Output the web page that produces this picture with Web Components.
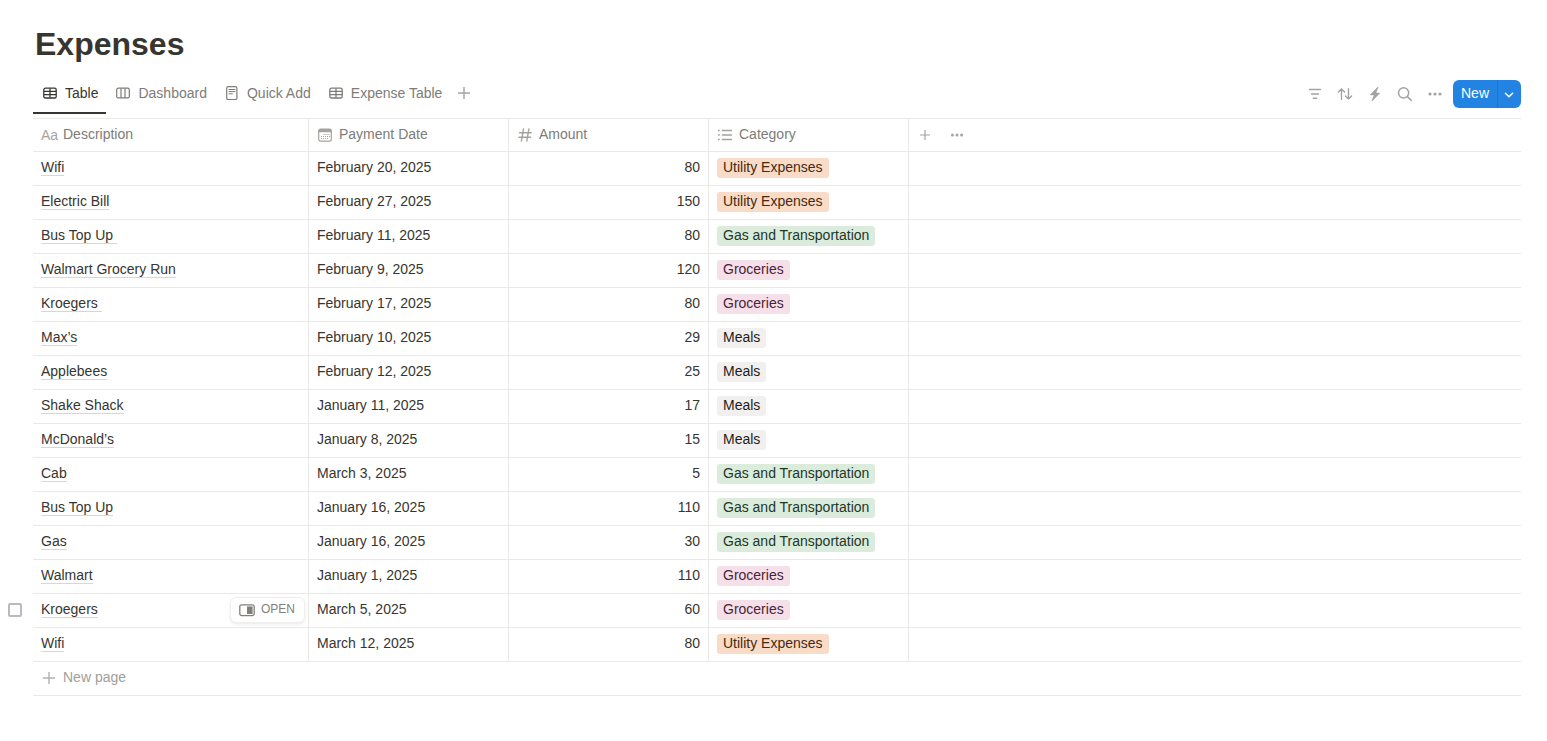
<!DOCTYPE html>
<html lang="en">
<head>
<meta charset="utf-8">
<title>Expenses</title>
<style>
html { background: #fff; }
body { margin: 0; font: 14px/20px "Liberation Sans", Arial, Helvetica, sans-serif; color: #37352f; }
</style>
</head>
<body>
<expenses-page></expenses-page>
<script>
const ICONS = {
  table: [14, 14, '<g fill="none" stroke="currentColor" stroke-width="1.3"><rect x=".8" y="2.2" width="12.4" height="9.8" rx="1.6"/><path d="M1 5.4h12M1 8.7h12M7 2.4v9.4"/></g>'],
  board: [14, 14, '<g fill="none" stroke="currentColor" stroke-width="1.2"><rect x=".7" y="2.2" width="12.6" height="9.7" rx="1.6"/><path d="M5 2.4v9.4M9 2.4v9.4"/></g>'],
  page: [14, 14, '<g fill="none" stroke="currentColor" stroke-width="1.2"><rect x="1.7" y=".7" width="10.2" height="12.8" rx="1.6"/><path d="M4 3.5h6M4 5.6h6M4 7.8h3.4" stroke-linecap="round" stroke-width="1"/></g>'],
  plus: [16, 16, '<path d="M8 2v12M2 8h12" fill="none" stroke="currentColor" stroke-width="1.4"/>'],
  smallplus: [16, 16, '<path d="M8 3v10M3 8h10" fill="none" stroke="currentColor" stroke-width="1.2"/>'],
  filter: [16, 16, '<path d="M2.6 3.5h10.8M4.5 8h7M6.4 12.3h3.2" fill="none" stroke="currentColor" stroke-width="1.6" stroke-linecap="round"/>'],
  sort: [16, 16, '<path d="M4.5 13.2V3M1.4 6.1l3.1-3.2 3.1 3.2M11.5 2.8V13M8.4 9.9l3.1 3.2 3.1-3.2" fill="none" stroke="currentColor" stroke-width="1.4" stroke-linecap="round" stroke-linejoin="round"/>'],
  bolt: [16, 16, '<path d="M10.6.9 3.3 8.4c-.4.4-.2.9.4.9h3.2l-2.3 5.3c-.2.6.4.9.8.5l7.3-7.5c.4-.4.2-.9-.4-.9H9.1l2.3-5.3c.2-.6-.4-.9-.8-.5z" fill="currentColor"/>'],
  search: [16, 16, '<g fill="none" stroke="currentColor" stroke-width="1.5" stroke-linecap="round"><circle cx="6.6" cy="6.8" r="5.1"/><path d="m10.4 10.6 3.8 3.8"/></g>'],
  dots: [16, 16, '<g fill="currentColor"><circle cx="3" cy="8" r="1.6"/><circle cx="8" cy="8" r="1.6"/><circle cx="13" cy="8" r="1.6"/></g>'],
  smalldots: [16, 16, '<g fill="currentColor"><circle cx="3.4" cy="8" r="1.5"/><circle cx="8" cy="8" r="1.5"/><circle cx="12.6" cy="8" r="1.5"/></g>'],
  chevron: [10, 10, '<path d="M1.4 3.2 5 6.8l3.6-3.6" fill="none" stroke="currentColor" stroke-width="1.5" stroke-linecap="round"/>'],
  date: [16, 16, '<rect x="1.7" y="2.2" width="12.6" height="12" rx="1.7" fill="none" stroke="currentColor" stroke-width="1.2"/><path d="M1.5 5.2V3.6Q1.5 2 3.2 2h9.6q1.7 0 1.7 1.6v1.6z" fill="currentColor"/><path d="M6.5 7.5H13M4 9.5h9M4 11.5h7" stroke="currentColor" stroke-width="1" stroke-dasharray="1 1"/>'],
  number: [16, 16, '<path d="M6.5 2 4.4 14M11.9 2 9.8 14M2.5 5.7h11.7M1.9 10.2h11.7" fill="none" stroke="currentColor" stroke-width="1.4" stroke-linecap="round"/>'],
  list: [16, 16, '<path d="M5.3 3.5h9.2M5.3 8h9.2M5.3 12.5h9.2" fill="none" stroke="currentColor" stroke-width="1.3" stroke-linecap="round"/><path d="M1 2.7h1.7v1.6H1zM1 7.2h1.7v1.6H1zM1 11.7h1.7v1.6H1z" fill="currentColor"/>'],
  peek: [16, 16, '<rect x=".8" y="2.8" width="14.4" height="10.8" rx="1.8" fill="none" stroke="currentColor" stroke-width="1.3"/><path d="M8 4.4h5.6v7.6H8z" fill="currentColor"/>']
};

class UiIcon extends HTMLElement {
  connectedCallback() {
    if (this.shadowRoot) return;
    const [w, h, body] = ICONS[this.getAttribute('name')];
    this.attachShadow({ mode: 'open' }).innerHTML =
      `<style>:host{display:inline-flex;flex:none}svg{display:block}</style>
       <svg width="${w}" height="${h}" viewBox="0 0 ${w} ${h}" aria-hidden="true">${body}</svg>`;
  }
}

class ViewTab extends HTMLElement {
  connectedCallback() {
    if (this.shadowRoot) return;
    const on = this.hasAttribute('selected');
    this.attachShadow({ mode: 'open' }).innerHTML = `
      <style>
        :host { display: block; }
        button { display: flex; align-items: center; gap: 8px; height: 42px; padding: 1px 8px 0 10px;
          border: 0; border-bottom: 2px solid transparent; background: none;
          font: inherit; color: #7d7c78; cursor: pointer; white-space: nowrap; }
        button[aria-selected=true] { color: #37352f; border-color: #37352f; }
        ui-icon { padding-top: 1px; }
      </style>
      <button type="button" role="tab" aria-selected="${on}"><ui-icon name="${this.getAttribute('icon')}"></ui-icon><span><slot></slot></span></button>`;
  }
}

class IconButton extends HTMLElement {
  connectedCallback() {
    if (this.shadowRoot) return;
    this.attachShadow({ mode: 'open' }).innerHTML = `
      <style>
        :host { display: block; color: #a5a39f; }
        button { display: flex; align-items: center; justify-content: center; width: 100%; height: 28px;
          padding: 0; border: 0; background: none; color: inherit; cursor: pointer; }
      </style>
      <button type="button" aria-label="${this.getAttribute('label')}"><ui-icon name="${this.getAttribute('icon')}"></ui-icon></button>`;
  }
}

class NewButton extends HTMLElement {
  connectedCallback() {
    if (this.shadowRoot) return;
    this.attachShadow({ mode: 'open' }).innerHTML = `
      <style>
        :host { display: flex; height: 28px; border-radius: 6px; overflow: hidden; background: #2383e2; color: #fff; }
        button { display: flex; align-items: center; justify-content: center; border: 0; background: none;
          color: inherit; font: inherit; cursor: pointer; padding: 0 8px 2px; }
        .more { width: 24px; padding: 2px 2px 0 0; border-left: 1px solid #1f75ca; }
      </style>
      <button type="button"><slot></slot></button>
      <button type="button" class="more" aria-label="More options"><ui-icon name="chevron"></ui-icon></button>`;
  }
}

class CategoryTag extends HTMLElement {
  connectedCallback() {
    if (this.shadowRoot) return;
    this.attachShadow({ mode: 'open' }).innerHTML = `
      <style>
        :host { display: inline-block; vertical-align: top; height: 20px; padding: 0 6px; border-radius: 3px;
          line-height: 18px; white-space: nowrap; background: #f1f0ef; color: #1e1c19; }
        :host([tone=orange]) { background: #f8dcc8; color: #49290e; }
        :host([tone=green]) { background: #dbecdd; color: #1c3829; }
        :host([tone=pink]) { background: #f5dfe9; color: #4c2337; }
      </style><slot></slot>`;
  }
}

class OpenButton extends HTMLElement {
  connectedCallback() {
    if (this.shadowRoot) return;
    this.attachShadow({ mode: 'open' }).innerHTML = `
      <style>
        :host { display: block; }
        button { display: flex; align-items: center; gap: 6px; height: 24px; padding: 0 9px 0 8px; border: 0; border-radius: 5px;
          background: #fff; color: #82807b; font: inherit; font-size: 12px; cursor: pointer;
          box-shadow: 0 0 0 1px #efeeed, 0 2px 4px #0000001a; }
        span { padding-bottom: 2px; }
      </style>
      <button type="button"><ui-icon name="peek"></ui-icon><span><slot></slot></span></button>`;
  }
}

const TONES = { 'Utility Expenses': 'orange', 'Gas and Transportation': 'green', 'Groceries': 'pink', 'Meals': 'gray' };
const ROWS = [
  ['Wifi', 'February 20, 2025', 80, 'Utility Expenses'],
  ['Electric Bill', 'February 27, 2025', 150, 'Utility Expenses'],
  ['Bus Top Up ', 'February 11, 2025', 80, 'Gas and Transportation'],
  ['Walmart Grocery Run', 'February 9, 2025', 120, 'Groceries'],
  ['Kroegers ', 'February 17, 2025', 80, 'Groceries'],
  ['Max’s', 'February 10, 2025', 29, 'Meals'],
  ['Applebees', 'February 12, 2025', 25, 'Meals'],
  ['Shake Shack', 'January 11, 2025', 17, 'Meals'],
  ['McDonald’s', 'January 8, 2025', 15, 'Meals'],
  ['Cab', 'March 3, 2025', 5, 'Gas and Transportation'],
  ['Bus Top Up', 'January 16, 2025', 110, 'Gas and Transportation'],
  ['Gas', 'January 16, 2025', 30, 'Gas and Transportation'],
  ['Walmart', 'January 1, 2025', 110, 'Groceries'],
  ['Kroegers', 'March 5, 2025', 60, 'Groceries', true],
  ['Wifi', 'March 12, 2025', 80, 'Utility Expenses']
];

class ExpenseTable extends HTMLElement {
  connectedCallback() {
    if (this.shadowRoot) return;
    const rows = ROWS.map(([name, date, amount, category, active]) => `
      <tr>
        <td class="gutter">${active ? '<input type="checkbox" aria-label="Select Kroegers">' : ''}</td>
        <td><div class="name"><a href="#">${name}</a>${active ? '<open-button>OPEN</open-button>' : ''}</div></td>
        <td>${date}</td>
        <td class="num">${amount}</td>
        <td class="tag"><category-tag tone="${TONES[category]}">${category}</category-tag></td>
        <td class="rest"></td>
      </tr>`).join('');
    this.attachShadow({ mode: 'open' }).innerHTML = `
      <style>
        :host { display: block; }
        table { width: 100%; table-layout: fixed; border-collapse: separate; border-spacing: 0; }
        .c0 { width: 33px; } .c1 { width: 276px; } .c2 { width: 200px; }
        th, td { box-sizing: border-box; height: 34px; padding: 5px 8px 8px; vertical-align: top; text-align: left;
          font-weight: 400; border: 0 solid #e9e9e7; border-width: 0 1px 1px 0; white-space: nowrap; }
        th { border-top-width: 1px; padding: 5px 8px 7px; color: #7d7c78; }
        .gutter { border: 0; padding: 0 8px 2px; vertical-align: middle; }
        .rest, .new { border-right: 0; }
        .rest { padding: 2px 2px 1px; }
        .num { text-align: right; }
        td.tag { padding: 6px 8px 7px; }
        .head { display: flex; align-items: center; gap: 6px; height: 20px; }
        .head ui-icon, .aa { color: #a5a39f; padding-top: 2px; }
        .aa { width: 16px; }
        .actions { display: flex; } .actions icon-button { width: 32px; }
        .actions icon-button:first-child { width: 28px; margin-right: 2px; }
        .name { display: flex; align-items: center; justify-content: space-between; height: 20px; }
        .name a { color: inherit; text-decoration: none; white-space: pre; line-height: 16px; border-bottom: 1px solid #d8d7d4; }
        open-button { margin: 1px -4px 0 0; }
        input { display: block; box-sizing: border-box; appearance: none; width: 14px; height: 14px; margin: 0; border: 2px solid #bab8c0; border-radius: 2px; background: #fff; }
        .new button { display: flex; align-items: center; gap: 6px; padding: 0; border: 0; background: none; font: inherit; color: #a09e9a; cursor: pointer; }
        .new ui-icon { padding-top: 2px; color: #b3b1ad; }
      </style>
      <table>
        <colgroup><col class="c0"><col class="c1"><col class="c2"><col class="c2"><col class="c2"><col></colgroup>
        <thead><tr>
          <td class="gutter"></td>
          <th scope="col"><div class="head"><span class="aa">Aa</span><span>Description</span></div></th>
          <th scope="col"><div class="head"><ui-icon name="date"></ui-icon>Payment Date</div></th>
          <th scope="col"><div class="head"><ui-icon name="number"></ui-icon>Amount</div></th>
          <th scope="col"><div class="head"><ui-icon name="list"></ui-icon>Category</div></th>
          <th class="rest"><div class="actions"><icon-button icon="smallplus" label="Add property"></icon-button><icon-button icon="smalldots" label="Property options"></icon-button></div></th>
        </tr></thead>
        <tbody>${rows}
          <tr><td class="gutter"></td><td class="new" colspan="5"><button type="button"><ui-icon name="plus"></ui-icon>New page</button></td></tr>
        </tbody>
      </table>`;
  }
}

class ExpensesPage extends HTMLElement {
  connectedCallback() {
    if (this.shadowRoot) return;
    this.attachShadow({ mode: 'open' }).innerHTML = `
      <style>
        :host { display: block; padding: 24px 26px 44px 0; }
        h1 { margin: 0 0 8px; padding-left: 35px; font-size: 32px; line-height: 40px; font-weight: 700; }
        .bar { display: flex; align-items: flex-start; padding: 0 0 4px 33px; }
        nav { display: flex; flex: 1; }
        .add { width: 28px; padding-top: 7px; }
        .tools { display: flex; padding-top: 8px; }
        .tools icon-button { width: 30px; }
        new-button { margin-left: 3px; }
      </style>
      <h1>Expenses</h1>
      <div class="bar">
        <nav role="tablist">
          <view-tab icon="table" selected>Table</view-tab>
          <view-tab icon="board">Dashboard</view-tab>
          <view-tab icon="page">Quick Add</view-tab>
          <view-tab icon="table">Expense Table</view-tab>
          <icon-button class="add" icon="plus" label="Add view"></icon-button>
        </nav>
        <div class="tools">
          <icon-button icon="filter" label="Filter"></icon-button>
          <icon-button icon="sort" label="Sort"></icon-button>
          <icon-button icon="bolt" label="Automations"></icon-button>
          <icon-button icon="search" label="Search"></icon-button>
          <icon-button icon="dots" label="More"></icon-button>
          <new-button>New</new-button>
        </div>
      </div>
      <expense-table></expense-table>`;
  }
}

customElements.define('ui-icon', UiIcon);
customElements.define('view-tab', ViewTab);
customElements.define('icon-button', IconButton);
customElements.define('new-button', NewButton);
customElements.define('category-tag', CategoryTag);
customElements.define('open-button', OpenButton);
customElements.define('expense-table', ExpenseTable);
customElements.define('expenses-page', ExpensesPage);
</script>
</body>
</html>
